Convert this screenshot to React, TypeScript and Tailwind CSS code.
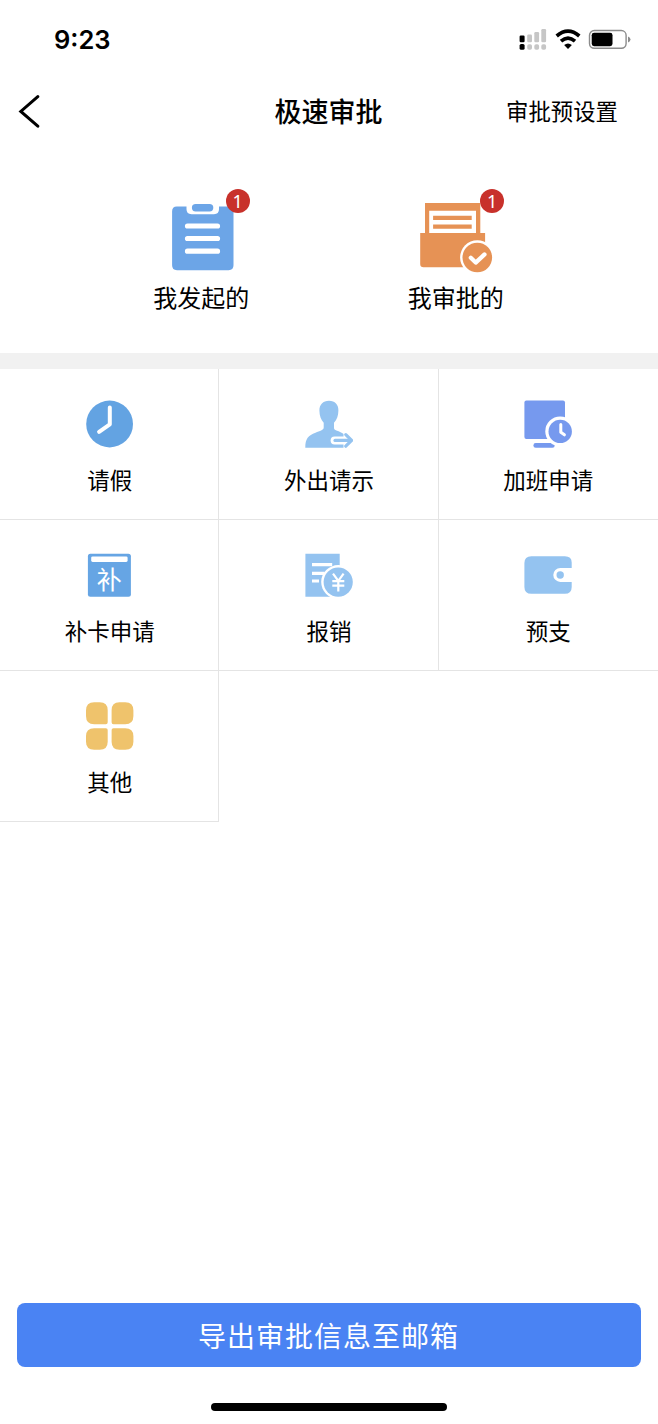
import type { ReactNode } from 'react';

function ClipboardIcon() {
  return (
    <svg width="76" height="72" viewBox="-0.5 0 76 72" fill="none">
      <path
        d="M13.3 5.5H23v2.8q0 4.9 5 4.9h22.5q5 0 5-4.9V5.5h9.8q4.7 0 4.7 4.7v54.1q0 4.9-4.9 4.9H13.5q-4.9 0-4.9-4.9V10.2q0-4.7 4.7-4.7Z"
        fill="#6ca5e7"
      />
      <rect x="28.4" y="3" width="21.4" height="7.4" rx="3.7" fill="#6ca5e7" />
      <path d="M24 25H54M24 37.5H54M24 50.2H54" stroke="#fff" strokeWidth="5.2" strokeLinecap="round" />
    </svg>
  );
}

function FolderCheckIcon() {
  return (
    <svg width="76" height="72" viewBox="-0.5 0 76 72" fill="none">
      <path d="M6.5 2h55.3v30h4.8v34.2H5q-3.3 0-3.3-3.3V32h4.8Z" fill="#e69255" />
      <path d="M10.7 9.7h46.8V32H10.7Z" fill="#fff" />
      <path d="M14.6 16.8h38.6M14.6 25.6h38.6" stroke="#e69255" strokeWidth="4.2" />
      <circle cx="58.8" cy="56.5" r="17.2" fill="#fff" />
      <circle cx="58.8" cy="56.5" r="14.8" fill="#e69255" />
      <path d="m52.3 56.8 4.9 4.8 8.8-8.2" stroke="#fff" strokeWidth="4.2" strokeLinecap="round" strokeLinejoin="round" />
    </svg>
  );
}

function ClockIcon() {
  return (
    <svg width="48" height="48" viewBox="0 0 48 48" fill="none">
      <circle cx="23.6" cy="24" r="23.4" fill="#63a3e2" />
      <path d="M23.8 7.6v16.7l-10.7 7.5" stroke="#fff" strokeWidth="4" strokeLinecap="round" strokeLinejoin="round" />
    </svg>
  );
}

function PersonIcon() {
  return (
    <svg width="48" height="48" viewBox="0 0 48 48" fill="none">
      <path
        d="M24 .7c6 0 9.6 4 9.4 9.8-.1 5.3-1.5 9.3-4.4 12.3v5.1c0 1.2.9 2 2.4 2.6 3.2 1.2 5.4 2.2 7.1 3.6v13.6H.3c0-9.1 3-12.2 10.2-14.9 4.3-1.6 8.2-2.6 8.2-5.2v-4.8c-2.8-3-4.2-7-4.3-12.3C14.3 4.7 18 .7 24 .7Z"
        fill="#94c3f0"
      />
      <path d="M29.6 40.4H40" stroke="#fff" strokeWidth="8" strokeLinecap="round" />
      <path d="M30 40.4H44" stroke="#94c3f0" strokeWidth="3.2" strokeLinecap="round" />
      <path d="m40.8 34.6 5.8 5.8-5.8 5.8" stroke="#94c3f0" strokeWidth="3.2" strokeLinecap="round" strokeLinejoin="round" />
    </svg>
  );
}

function MonitorIcon() {
  return (
    <svg width="48" height="48" viewBox="0 0 48 48" fill="none">
      <rect x=".4" y=".5" width="40.6" height="38.4" rx="2" fill="#7699ee" />
      <path d="M11.7 45.4h16.7" stroke="#7699ee" strokeWidth="4.6" strokeLinecap="round" />
      <circle cx="36.2" cy="31.4" r="14.9" fill="#fff" />
      <circle cx="36.2" cy="31.4" r="11.7" fill="#7699ee" />
      <path d="M36.8 24.4v7.8l3.6 2.6" stroke="#fff" strokeWidth="3" strokeLinecap="round" strokeLinejoin="round" />
    </svg>
  );
}

function CardIcon() {
  return (
    <svg width="48" height="48" viewBox="0 0 48 48" fill="none">
      <rect x="1.9" y="2.7" width="43" height="43" rx="2.5" fill="#66a5e4" />
      <rect x="5.2" y="5.4" width="36.4" height="5.6" rx="1.4" fill="#fff" />
      <text x="23.2" y="38" textAnchor="middle" fontSize="25" fontFamily="Noto Sans CJK SC, sans-serif" fill="#fff">
        补
      </text>
    </svg>
  );
}

function ReceiptIcon() {
  return (
    <svg width="48" height="48" viewBox="0 0 48 48" fill="none">
      <path d="M.4 2.7h34.3v43H.4Z" fill="#94c3f0" />
      <path d="M7 13.7h20.2M7 22.3h12.5M7 30h7" stroke="#fff" strokeWidth="3.2" />
      <circle cx="33.2" cy="31.1" r="17" fill="#fff" />
      <circle cx="33.2" cy="31.1" r="14.6" fill="#94c3f0" />
      <path d="m28 22.7 5.3 7.3 5.3-7.3M27.3 30.2h12M27.3 34.6h12M33.3 30v10.4" stroke="#fff" strokeWidth="2.2" />
    </svg>
  );
}

function WalletIcon() {
  return (
    <svg width="48" height="48" viewBox="0 0 48 48" fill="none">
      <path
        d="M7.4 5.2h33.4q6.9 0 6.9 6.2v5.5H36.3a7 7 0 0 0 0 14h11.4v5q0 6.8-6.9 6.8H7.4q-7 0-7-6.8V12q0-6.8 7-6.8Z"
        fill="#94c3f0"
      />
      <circle cx="36.2" cy="24" r="3.7" fill="#94c3f0" />
    </svg>
  );
}

function OtherIcon() {
  return (
    <svg width="48" height="48" viewBox="0.3 0 48 48" fill="#efc36c">
      <path d="M8.5.3H14q8 0 8 8v12q0 1.9-1.9 1.9H8.5Q.3 22.2.3 14V8.5Q.3.3 8.5.3Z" />
      <path d="M33.8.3h5.7q8.2 0 8.2 8.2V14q0 8.2-8.2 8.2H27.8q-1.9 0-1.9-1.9v-12q0-8 7.9-8Z" />
      <path d="M8.5 26.2h11.6q1.9 0 1.9 1.9v11.6q0 8-8 8H8.5q-8.2 0-8.2-8v-5.5q0-8 8.2-8Z" />
      <path d="M27.8 26.2h11.7q8.2 0 8.2 8v5.5q0 8-8.2 8h-5.7q-7.9 0-7.9-8V28.1q0-1.9 1.9-1.9Z" />
    </svg>
  );
}

function StatusIcons() {
  return (
    <svg width="112" height="24" viewBox="0 0 112 24" fill="none">
      <g fill="#c6c6c6">
        <rect x="8.2" y="6.5" width="4.8" height="7.8" rx="1.2" />
        <rect x="15.3" y="4" width="4.8" height="10.3" rx="1.2" />
        <rect x="22.3" y="1" width="4.8" height="13.3" rx="1.2" />
        <rect x="8.2" y="16.2" width="4.8" height="5.6" rx="1.8" />
        <rect x="15.3" y="16.2" width="4.8" height="5.6" rx="1.8" />
        <rect x="22.3" y="16.2" width="4.8" height="5.6" rx="1.8" />
      </g>
      <rect x=".6" y="7.5" width="5" height="6.8" rx="1.2" fill="#000" />
      <rect x=".6" y="16" width="5" height="5.8" rx="1.6" fill="#000" />
      <path d="M37.7 8q11.3-9.6 22.6 0M42 13.2q7-6.1 14 0" stroke="#000" strokeWidth="3.7" />
      <path d="M45.1 16.9q3.9-3 7.8 0l-3.9 4Z" fill="#000" />
      <rect x="70.5" y="2.5" width="36.6" height="17.8" rx="4.8" stroke="#8b8b8b" strokeWidth="1.4" />
      <rect x="72.7" y="4.8" width="20.8" height="13.4" rx="2.4" fill="#000" />
      <path d="M109 8.4q2.5 1 2.5 3.1t-2.5 3.1Z" fill="#8b8b8b" />
    </svg>
  );
}

type Item = { label: string; icon: ReactNode };

const entries: Item[] = [
  { label: '我发起的', icon: <ClipboardIcon /> },
  { label: '我审批的', icon: <FolderCheckIcon /> },
];

const rows: Item[][] = [
  [
    { label: '请假', icon: <ClockIcon /> },
    { label: '外出请示', icon: <PersonIcon /> },
    { label: '加班申请', icon: <MonitorIcon /> },
  ],
  [
    { label: '补卡申请', icon: <CardIcon /> },
    { label: '报销', icon: <ReceiptIcon /> },
    { label: '预支', icon: <WalletIcon /> },
  ],
  [{ label: '其他', icon: <OtherIcon /> }],
];

export default function App() {
  return (
    <div className="flex h-[1424px] w-[658px] flex-col overflow-hidden bg-white font-['Liberation_Sans','Noto_Sans_CJK_SC',sans-serif] text-black">
      <header className="flex h-20 shrink-0 items-center justify-between pr-[27px] pl-[54px]">
        <span className="font-['Inter',sans-serif] text-[25.5px] leading-none font-semibold">9:23</span>
        <StatusIcons />
      </header>

      <nav className="grid h-16 shrink-0 grid-cols-[1fr_auto_1fr] items-center pr-10 pl-[18px]">
        <button aria-label="返回" className="w-fit">
          <svg width="24" height="34" viewBox="0 0 24 34" fill="none">
            <path d="M19.8 1.6 2.8 16.4l17 14.8" stroke="#000" strokeWidth="3" strokeLinecap="round" />
          </svg>
        </button>
        <h1 className="pt-[3px] pl-[21px] text-[27px] leading-none font-medium">极速审批</h1>
        <button className="justify-self-end pt-[3px] text-[22.4px] leading-none">审批预设置</button>
      </nav>

      <section className="grid h-[209px] shrink-0 grid-cols-2 pt-[57px] pr-[75px] pl-[74px]">
        {entries.map((entry) => (
          <div key={entry.label} className="flex flex-col items-center">
            <div className="relative">
              {entry.icon}
              <span className="absolute -top-3 left-[62.5px] flex size-6 items-center justify-center rounded-full bg-[#c8312b] pb-px font-['Noto_Sans',sans-serif] text-lg leading-none text-white">
                1
              </span>
            </div>
            <span className="mt-3.5 text-2xl leading-6">{entry.label}</span>
          </div>
        ))}
      </section>

      <div className="h-4 shrink-0 bg-[#f1f1f1]" />

      <main className="flex-1">
        {rows.map((row, index) => (
          <div key={index} className="grid h-[151px] grid-cols-3">
            {row.map((item) => (
              <div
                key={item.label}
                className="flex flex-col items-center border-r border-b border-[#e4e4e4] pt-[31px] pl-px nth-3:border-r-0 nth-3:pl-0"
              >
                {item.icon}
                <span className="mt-[22px] text-[22.5px] leading-6">{item.label}</span>
              </div>
            ))}
          </div>
        ))}
      </main>

      <footer className="flex shrink-0 flex-col items-center px-[17px] pb-[13px]">
        <button className="h-16 w-full rounded-lg bg-[#4a83f3] pt-1.5 pr-px text-[28px] leading-none tracking-[1px] text-white">
          导出审批信息至邮箱
        </button>
        <div className="mt-9 h-2 w-[236px] rounded-full bg-black" />
      </footer>
    </div>
  );
}
